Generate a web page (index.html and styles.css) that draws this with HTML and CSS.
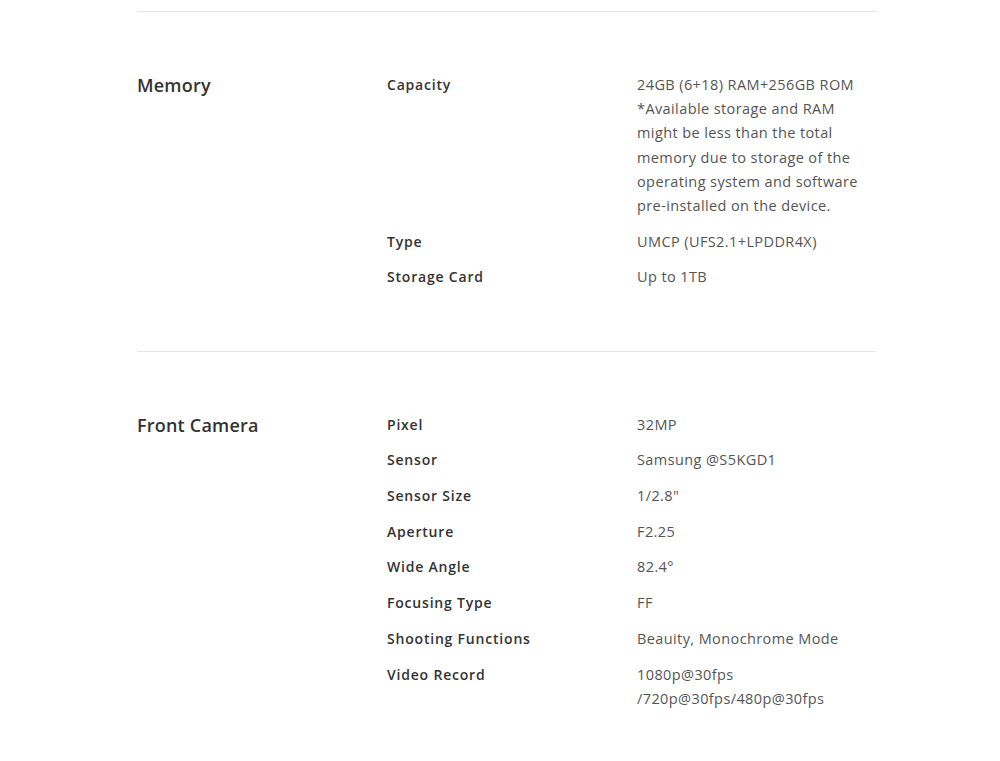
FILE: index.html
```html
<!DOCTYPE html>
<html>
<head>
<meta charset="utf-8">
<link rel="stylesheet" href="styles.css">
</head>
<body>
<div class="page">
  <section class="spec">
    <h2 class="spec-title">Memory</h2>
    <dl class="spec-list">
      <dt>Capacity</dt>
      <dd>24GB (6+18) RAM+256GB ROM *Available storage and RAM might be less than the total memory due to storage of the operating system and software pre-installed on the device.</dd>
      <dt>Type</dt>
      <dd>UMCP (UFS2.1+LPDDR4X)</dd>
      <dt>Storage Card</dt>
      <dd>Up to 1TB</dd>
    </dl>
  </section>
  <section class="spec">
    <h2 class="spec-title">Front Camera</h2>
    <dl class="spec-list">
      <dt>Pixel</dt>
      <dd>32MP</dd>
      <dt>Sensor</dt>
      <dd>Samsung @S5KGD1</dd>
      <dt>Sensor Size</dt>
      <dd>1/2.8"</dd>
      <dt>Aperture</dt>
      <dd>F2.25</dd>
      <dt>Wide Angle</dt>
      <dd>82.4°</dd>
      <dt>Focusing Type</dt>
      <dd>FF</dd>
      <dt>Shooting Functions</dt>
      <dd>Beauity, Monochrome Mode</dd>
      <dt>Video Record</dt>
      <dd>1080p@30fps<br>/720p@30fps/480p@30fps</dd>
    </dl>
  </section>
</div>
</body>
</html>
```
FILE: styles.css
```css
html, body {
  margin: 0;
  padding: 0;
  background: #fff;
}
body {
  font-family: "Open Sans", "Liberation Sans", sans-serif;
  color: #333;
}
.page {
  width: 739px;
  margin-left: 137px;
  padding-top: 11px;
}
.spec {
  display: grid;
  grid-template-columns: 250px 1fr;
  border-top: 1px solid #e6e6e6;
  padding: 61px 0 61px;
}
.spec-title {
  margin: 0;
  font-size: 18px;
  font-weight: 600;
  line-height: 24px;
  letter-spacing: 0.2px;
  color: #333;
}
.spec-list {
  margin: 0;
  display: grid;
  grid-template-columns: 250px 1fr;
  row-gap: 11.5px;
}
.spec-list dt {
  font-size: 14px;
  font-weight: 600;
  line-height: 24px;
  letter-spacing: 0.8px;
  color: #333;
}
.spec-list dd {
  margin: 0;
  max-width: 232px;
  font-size: 14.5px;
  font-weight: 400;
  line-height: 24.2px;
  letter-spacing: 0.4px;
  color: #555;
}
```
